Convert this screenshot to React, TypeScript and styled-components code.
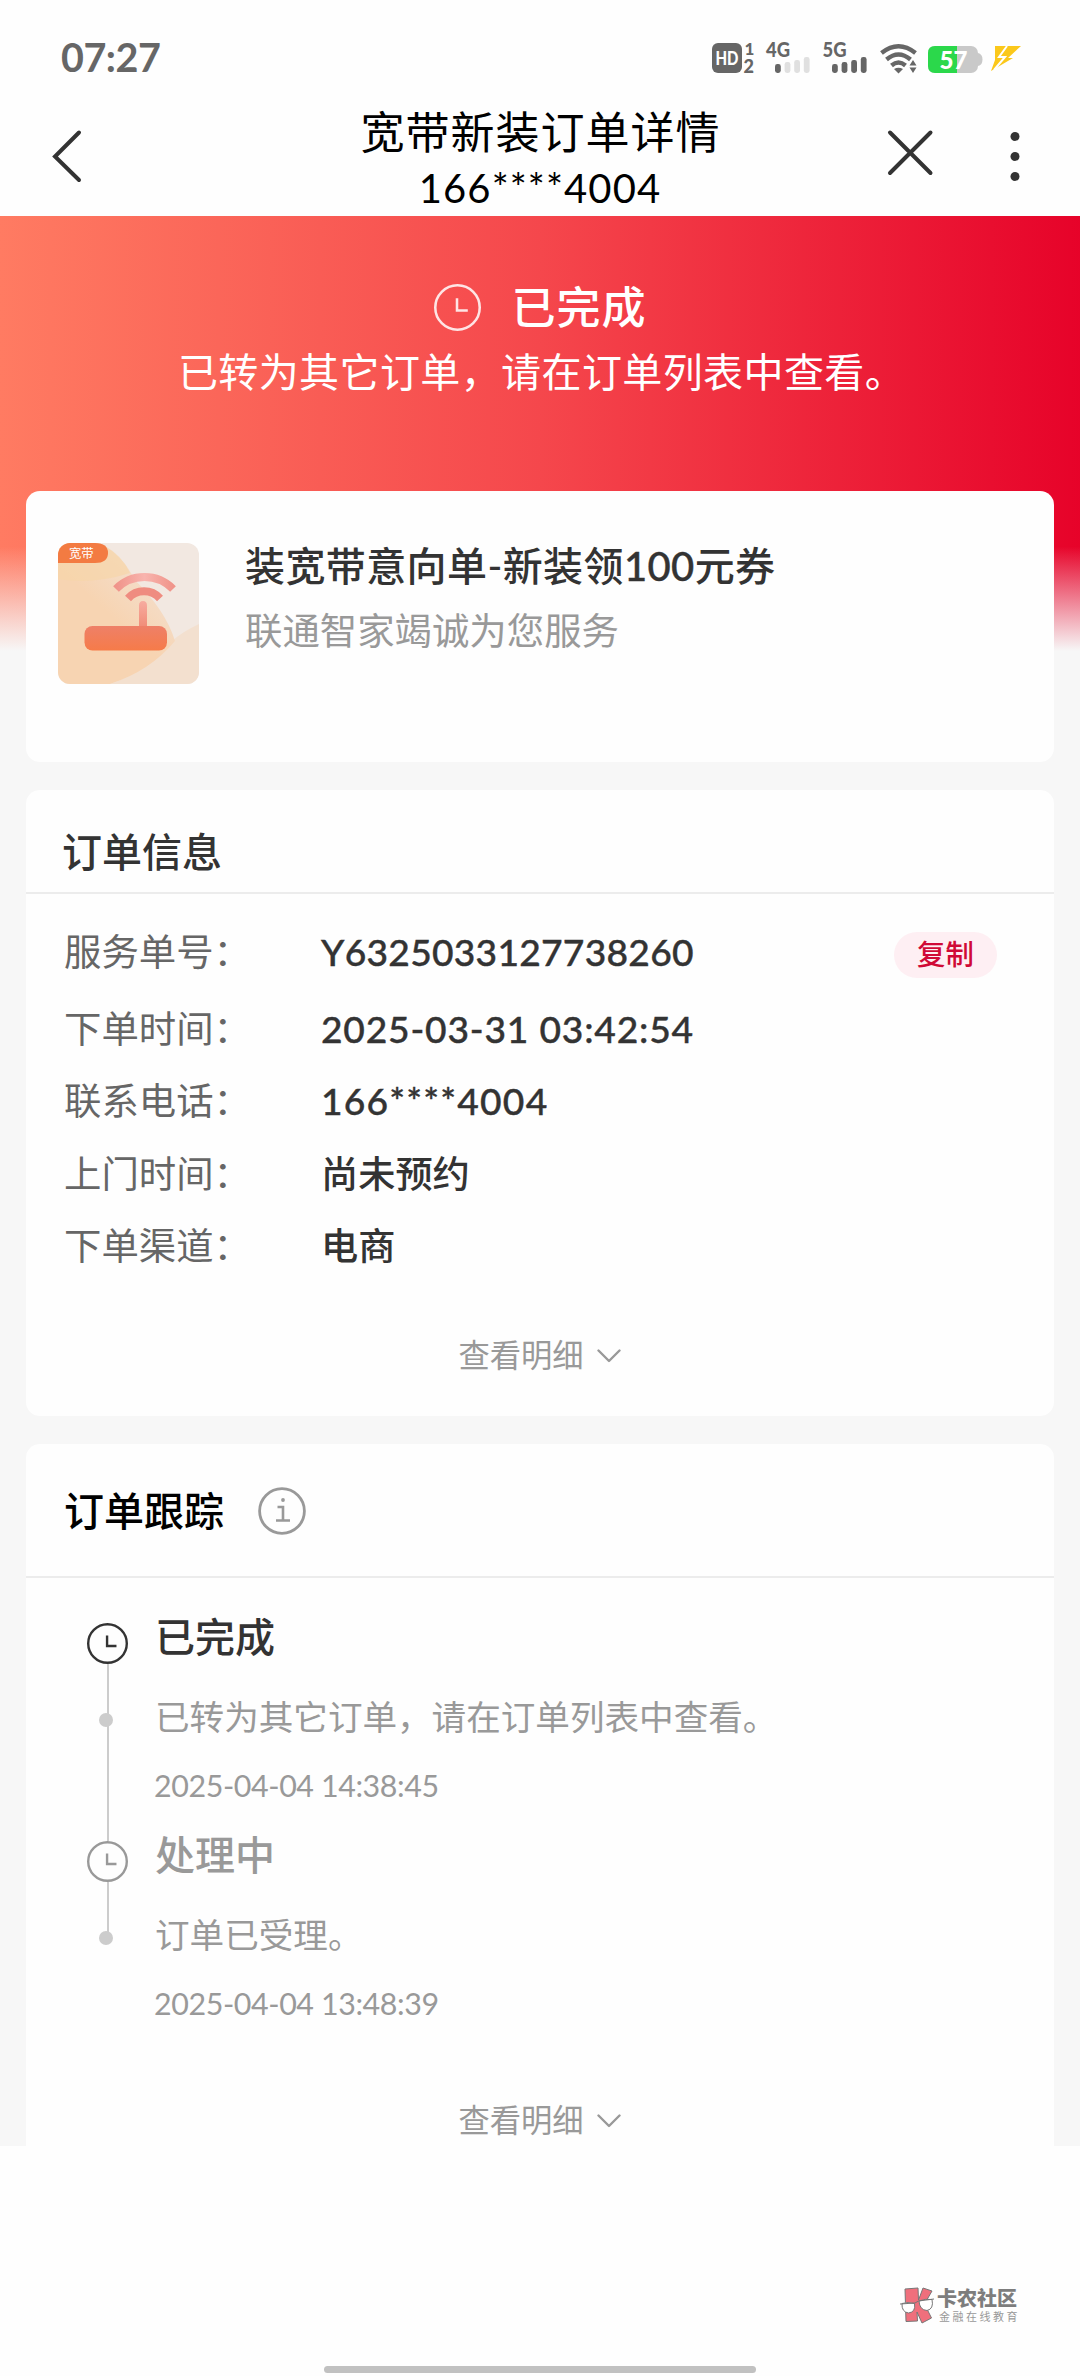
import React from "react";
import styled, { createGlobalStyle } from "styled-components";

const GlobalStyle = createGlobalStyle`
  body {
    margin: 0;
    background: #fefefe;
  }
  * {
    box-sizing: border-box;
  }
`;

const Page = styled.div`
  width: 1080px;
  height: 2376px;
  display: flex;
  flex-direction: column;
  background: #fefefe;
  overflow: hidden;
  font-family: Lato, "Noto Sans CJK SC", sans-serif;
  line-height: 1.2;
  color: #333;
  white-space: nowrap;
`;

const StatusBar = styled.div`
  height: 102px;
  flex: none;
  padding: 30px 59px 14px 60px;
  display: flex;
  align-items: flex-start;
  justify-content: space-between;
  color: #666;
`;

const Clock = styled.div`
  font-size: 39.5px;
  line-height: 54px;
  font-weight: 700;
  letter-spacing: -0.5px;
  padding-left: 1px;
`;

const StatusIcons = styled.svg`
  display: block;
  width: 320px;
  height: 42px;
  margin-top: 8px;
  font-family: Lato, "Noto Sans CJK SC", sans-serif;
`;

const NavBar = styled.div`
  height: 114px;
  flex: none;
  display: grid;
  grid-template-columns: 300px 1fr 300px;
`;

const NavTitle = styled.div`
  display: flex;
  flex-direction: column;
  align-items: center;
  color: #000;
`;

const TitleText = styled.div`
  padding-left: 1px;
  font-size: 44px;
  letter-spacing: 1px;
  line-height: 60px;
`;

const TitlePhone = styled.div`
  font-size: 40px;
  letter-spacing: 1.1px;
  line-height: 52px;
`;

const NavLeft = styled.div`
  padding: 26px 0 0 50px;
`;

const NavRight = styled.div`
  display: flex;
  justify-content: flex-end;
  gap: 75px;
  padding: 26px 59px 0 0;
`;

const Icon = styled.svg`
  display: block;
  flex: none;
`;

const Main = styled.main`
  height: 1930px;
  flex: none;
  padding: 0 26px;
  background-color: #f7f7f7;
  background-image: linear-gradient(
      to bottom,
      rgba(247, 247, 247, 0) 76%,
      #f7f7f7 100%
    ),
    linear-gradient(to right, #ff7b62 0%, #f5474c 50%, #e60028 102%);
  background-size: 100% 435px;
  background-repeat: no-repeat;
`;

const Hero = styled.section`
  height: 275px;
  padding-top: 60px;
  color: #fff;
  display: flex;
  flex-direction: column;
  align-items: center;
`;

const HeroStatus = styled.div`
  display: flex;
  align-items: center;
  gap: 31px;
  height: 62px;
  font-size: 44px;
  font-weight: 500;
  letter-spacing: 1px;
`;

const HeroNote = styled.div`
  margin-top: 4px;
  padding-left: 3px;
  font-size: 40px;
  letter-spacing: 0.4px;
  line-height: 60px;
`;

const Card = styled.section<{ $height: number; $open?: boolean }>`
  height: ${(p) => p.$height}px;
  background: #fefefe;
  border-radius: ${(p) => (p.$open ? "14px 14px 0 0" : "14px")};
  display: flex;
  flex-direction: column;
  & + & {
    margin-top: 28px;
  }
`;

const Product = styled.div`
  display: flex;
  gap: 46px;
  padding: 52px 32px;
`;

const ProductText = styled.div`
  display: flex;
  flex-direction: column;
`;

const ProductName = styled.div`
  font-size: 40px;
  font-weight: 500;
  letter-spacing: 0.4px;
  line-height: 46px;
`;

const ProductDesc = styled.div`
  margin-top: 19px;
  font-size: 37.4px;
  line-height: 46px;
  color: #999;
`;

const CardHead = styled.div<{ $height: number; $color: string; $left: number }>`
  height: ${(p) => p.$height}px;
  flex: none;
  padding-left: ${(p) => p.$left}px;
  padding-top: ${(p) => (p.$height > 110 ? 2 : 22)}px;
  border-bottom: 2px solid #ececec;
  display: flex;
  align-items: center;
  gap: 34px;
  font-size: 40px;
  font-weight: 500;
  color: ${(p) => p.$color};
`;

const InfoList = styled.div`
  display: grid;
  grid-template-columns: 257px 1fr auto;
  grid-template-rows: 82px 72px 73px 72px 73px;
  align-items: center;
  padding: 17px 57px 0 38px;
`;

const Label = styled.div`
  font-size: 37.4px;
  color: #666;
  grid-column: 1;
`;

const Value = styled.div<{ $spacing?: number }>`
  font-size: 37.2px;
  font-weight: 500;
  letter-spacing: ${(p) => p.$spacing ?? 0}px;
  -webkit-text-stroke: ${(p) => (p.$spacing === undefined ? "0" : "0.4px currentColor")};
`;

const Amount = styled.span`
  -webkit-text-stroke: 0.4px currentColor;
`;

const CopyButton = styled.button`
  width: 103px;
  height: 46px;
  margin-top: 5px;
  padding: 0;
  border: 0;
  border-radius: 23px;
  background: #feeff3;
  color: #d00a36;
  font: 500 28.4px/45px Lato, "Noto Sans CJK SC", sans-serif;
`;

const MoreLink = styled.div<{ $top: number }>`
  margin-top: ${(p) => p.$top}px;
  display: flex;
  align-items: center;
  justify-content: center;
  gap: 13px;
  height: 48px;
  padding-right: 1px;
  font-size: 31.3px;
  color: #999;
`;

const Timeline = styled.div`
  padding: 34px 0 0 60px;
  display: flex;
  flex-direction: column;
`;

const Step = styled.div`
  height: 218px;
  display: grid;
  grid-template-columns: 42px 1fr;
  column-gap: 27px;
`;

const Rail = styled.div`
  display: flex;
  flex-direction: column;
  align-items: center;
  padding-top: 11px;
`;

const RailLine = styled.div<{ $height: number }>`
  width: 2px;
  height: ${(p) => p.$height}px;
  flex: none;
  margin-left: 2px;
  background: #ccc;
`;

const RailDot = styled.div`
  width: 14px;
  height: 14px;
  flex: none;
  margin: -1px 2px -1px 0;
  border-radius: 50%;
  background: #ccc;
`;

const StepBody = styled.div`
  display: flex;
  flex-direction: column;
`;

const StepTitle = styled.div<{ $active: boolean }>`
  font-size: 40px;
  font-weight: 500;
  line-height: 50px;
  color: ${(p) => (p.$active ? "#333" : "#999")};
`;

const StepNote = styled.div`
  margin-top: 31px;
  font-size: 34.6px;
  line-height: 48px;
  color: #999;
`;

const StepTime = styled.div`
  margin-top: 24px;
  margin-left: -1px;
  font-size: 30.4px;
  letter-spacing: -0.4px;
  line-height: 40px;
  color: #999;
`;

const Footer = styled.footer`
  flex: 1;
  display: flex;
  flex-direction: column;
  align-items: center;
  justify-content: space-between;
  padding: 141px 0 3px;
`;

const Brand = styled.div`
  align-self: flex-end;
  display: flex;
  gap: 3px;
  margin-right: 60px;
`;

const BrandText = styled.div`
  display: flex;
  flex-direction: column;
`;

const BrandName = styled.div`
  font-size: 20px;
  font-weight: 900;
  line-height: 23px;
  color: #7d7d7d;
`;

const BrandSlogan = styled.div`
  padding-left: 2px;
  font-size: 11px;
  letter-spacing: 2.5px;
  line-height: 14px;
  color: #999;
`;

const HomeIndicator = styled.div`
  width: 432px;
  height: 7px;
  border-radius: 4px;
  background: #c1c1c1;
`;

const ClockIcon = ({ size, color, stroke }: { size: number; color: string; stroke: number }) => (
  <Icon width={size} height={size} viewBox="0 0 48 48" fill="none" stroke={color} strokeWidth={stroke}>
    <circle cx="24" cy="24" r={24 - stroke / 2} />
    <path d="M23.5 14.5V27H34.5" />
  </Icon>
);

const Chevron = () => (
  <Icon width="24" height="14" viewBox="0 0 24 14" fill="none" stroke="#999" strokeWidth="2.4" strokeLinecap="round" strokeLinejoin="round">
    <path d="M1.5 1.5L12 12L22.5 1.5" />
  </Icon>
);

const RouterPicture = () => (
  <Icon width="141" height="141" viewBox="0 0 141 141">
    <defs>
      <clipPath id="tile">
        <rect width="141" height="141" rx="12" />
      </clipPath>
      <linearGradient id="router" x1="0" y1="0" x2="0" y2="1">
        <stop offset="0" stopColor="#ee8068" />
        <stop offset="1" stopColor="#f67b49" />
      </linearGradient>
      <linearGradient id="mast" x1="0" y1="0" x2="0" y2="1">
        <stop offset="0" stopColor="#f7aca0" />
        <stop offset="1" stopColor="#f08a74" />
      </linearGradient>
      <linearGradient id="wave" x1="0" y1="0" x2="1" y2="0">
        <stop offset="0" stopColor="#f0948a" />
        <stop offset="0.5" stopColor="#f8b4ae" />
        <stop offset="1" stopColor="#f0948a" />
      </linearGradient>
      <linearGradient id="sand" gradientUnits="userSpaceOnUse" x1="95" y1="20" x2="50" y2="70">
        <stop offset="0" stopColor="#f3e0d0" />
        <stop offset="1" stopColor="#f7d4b2" />
      </linearGradient>
    </defs>
    <g clipPath="url(#tile)">
      <rect width="141" height="141" fill="#f2e8e1" />
      <path d="M141 81Q124 89 114 98Q86 130 52 141H141Z" fill="#f3e0cf" />
      <path d="M0 0H42Q66 14 76 36Q108 68 117 98Q92 128 52 141H0Z" fill="url(#sand)" />
      <path d="M0 36Q34 42 72 30Q64 12 45 2H0Z" fill="#f6d5aa" opacity="0.7" />
      <path d="M0 0H37Q50 0 50 10Q50 20 37 20H0Z" fill="#f37b42" />
      <text x="11" y="14.5" fontSize="12.3" fill="#fff" fontFamily='"Noto Sans CJK SC", sans-serif'>宽带</text>
      <path d="M58 46A40 40 0 0 1 115 46" fill="none" stroke="url(#wave)" strokeWidth="8" />
      <path d="M70 55.500A21.500 21.500 0 0 1 102 55.500" fill="none" stroke="#ef8c80" strokeWidth="8" />
      <path d="M81 86V62.500Q81 58 85 58Q89 58 89 62.500V86Z" fill="url(#mast)" />
      <rect x="26.500" y="83" width="82.500" height="24.500" rx="8" fill="url(#router)" />
    </g>
  </Icon>
);

const BrandLogo = () => (
  <Icon width="34" height="37" viewBox="0 0 34 37" stroke="#777" strokeWidth="1" strokeLinejoin="round">
    <path d="M5 2L18 1L18.500 13L23 1L32 4L24.500 17L31.500 31L22 36L17 25L17.500 34L6 34.500Z" fill="#ef6f7c" />
    <path d="M2 16.500Q8 14.500 14.500 16.500Q16 25 8.500 26Q1.500 25 2 16.500Z" fill="#fff" />
    <path d="M19 14Q25 11.500 32 12.500Q34 22 27 23.500Q19.500 23 19 14Z" fill="#fff" />
    <path d="M0 17L15 16L18.500 14L34 12" fill="none" />
  </Icon>
);

const SignalBars = ({ x, level }: { x: number; level: number }) => (
  <g>
    {[26, 24, 22, 19].map((y, i) => (
      <rect key={y} x={x + i * 9.6} y={y} width="5.8" height={35 - y} rx="2.4" fill={i < level ? "#666" : "#e0e0e0"} />
    ))}
  </g>
);

const info = [
  { label: "服务单号：", value: "Y6325033127738260", spacing: 0.25, copy: true },
  { label: "下单时间：", value: "2025-03-31 03:42:54", spacing: 0.8 },
  { label: "联系电话：", value: "166****4004", spacing: 1.2 },
  { label: "上门时间：", value: "尚未预约" },
  { label: "下单渠道：", value: "电商" },
];

const steps = [
  { title: "已完成", note: "已转为其它订单，请在订单列表中查看。", time: "2025-04-04 14:38:45" },
  { title: "处理中", note: "订单已受理。", time: "2025-04-04 13:48:39" },
];

export default function App() {
  return (
    <Page>
      <GlobalStyle />
      <StatusBar>
        <Clock>07:27</Clock>
        <StatusIcons viewBox="0 0 320 42" fill="#666">
          <rect x="11" y="5" width="30" height="30" rx="6" />
          <text x="14.500" y="26.500" fontSize="18.500" fontWeight="900" fill="#fff" textLength="23" lengthAdjust="spacingAndGlyphs">HD</text>
          <text x="43.500" y="17" fontSize="17" fontWeight="900">1</text>
          <text x="42.500" y="35" fontSize="18" fontWeight="900">2</text>
          <text x="65" y="19" fontSize="20" fontWeight="900" textLength="24" lengthAdjust="spacingAndGlyphs">4G</text>
          <SignalBars x={74} level={1} />
          <text x="121.500" y="19" fontSize="20" fontWeight="900" textLength="24" lengthAdjust="spacingAndGlyphs">5G</text>
          <SignalBars x={131} level={4} />
          <g fill="none" stroke="#666" strokeWidth="4.4">
            <path d="M180.500 15Q197.500 1.500 214.500 15" />
            <path d="M185.500 21.500Q197.500 11.500 209.500 21.500" />
            <path d="M190.500 27.500Q197.500 21.500 204.500 27.500" />
          </g>
          <path d="M193 31Q197.500 28.500 202 31L197.500 35.500Z" />
          <path d="M208.500 27.500L212 22L215.500 27.500ZM208.500 29.500L212 35L215.500 29.500Z" />
          <rect x="227" y="8" width="50" height="27" rx="7" fill="#c9c9c9" />
          <path d="M277 15Q281.500 16 281.500 21.500Q281.500 27 277 28Z" fill="#c9c9c9" />
          <path d="M234 8H256V35H234Q227 35 227 28V15Q227 8 234 8Z" fill="#2bd84b" />
          <text x="238.500" y="30.500" fontSize="25" fontWeight="900" fill="#fff" textLength="28" lengthAdjust="spacingAndGlyphs">57</text>
          <path d="M294 8H320L307 20H312L290 33L294 22Z" fill="#fbc81b" />
          <path d="M306 8L298 19L304 19L293 32" fill="none" stroke="#fff" strokeWidth="2" />
        </StatusIcons>
      </StatusBar>
      <NavBar>
        <NavLeft>
          <Icon width="34" height="56" viewBox="0 0 34 56" fill="none" stroke="#333" strokeWidth="4" strokeLinecap="round">
            <path d="M29 4.500L5 28.500L29 52" />
          </Icon>
        </NavLeft>
        <NavTitle>
          <TitleText>宽带新装订单详情</TitleText>
          <TitlePhone>166****4004</TitlePhone>
        </NavTitle>
        <NavRight>
          <Icon width="48" height="50" viewBox="0 0 48 50" fill="none" stroke="#333" strokeWidth="4" strokeLinecap="round">
            <path d="M4 4.500L44.500 45M44.500 4.500L4 45" />
          </Icon>
          <Icon width="12" height="56" viewBox="0 0 12 56" fill="#333">
            <circle cx="6" cy="8.500" r="4.500" />
            <circle cx="6" cy="28.500" r="4.500" />
            <circle cx="6" cy="48.500" r="4.500" />
          </Icon>
        </NavRight>
      </NavBar>
      <Main>
        <Hero>
          <HeroStatus>
            <ClockIcon size={47} color="rgba(255,255,255,0.85)" stroke={2.6} />
            已完成
          </HeroStatus>
          <HeroNote>已转为其它订单，请在订单列表中查看。</HeroNote>
        </Hero>
        <Card $height={271}>
          <Product>
            <RouterPicture />
            <ProductText>
              <ProductName>
                装宽带意向单-新装领<Amount>100</Amount>元券
              </ProductName>
              <ProductDesc>联通智家竭诚为您服务</ProductDesc>
            </ProductText>
          </Product>
        </Card>
        <Card $height={626}>
          <CardHead $height={104} $color="#333" $left={36}>订单信息</CardHead>
          <InfoList>
            {info.map((row) => (
              <React.Fragment key={row.label}>
                <Label>{row.label}</Label>
                <Value $spacing={row.spacing}>{row.value}</Value>
                {row.copy && <CopyButton>复制</CopyButton>}
              </React.Fragment>
            ))}
          </InfoList>
          <MoreLink $top={49}>
            查看明细
            <Chevron />
          </MoreLink>
        </Card>
        <Card $height={703} $open>
          <CardHead $height={134} $color="#000" $left={38}>
            订单跟踪
            <Icon width="48" height="48" viewBox="0 0 48 48" fill="none" stroke="#999" strokeWidth="2.8">
              <circle cx="24" cy="24" r="22.400" />
              <path d="M19.500 20H25V33M18 33.500H32" strokeWidth="2.600" />
              <circle cx="25" cy="13" r="1.900" fill="#999" stroke="none" />
            </Icon>
          </CardHead>
          <Timeline>
            {steps.map((s, i) => (
              <Step key={s.title}>
                <Rail>
                  <ClockIcon size={41} color={i === 0 ? "#333" : "#999"} stroke={2.8} />
                  <RailLine $height={50} />
                  <RailDot />
                  {i === 0 && <RailLine $height={115} />}
                </Rail>
                <StepBody>
                  <StepTitle $active={i === 0}>{s.title}</StepTitle>
                  <StepNote>{s.note}</StepNote>
                  <StepTime>{s.time}</StepTime>
                </StepBody>
              </Step>
            ))}
          </Timeline>
          <MoreLink $top={49}>
            查看明细
            <Chevron />
          </MoreLink>
        </Card>
      </Main>
      <Footer>
        <Brand>
          <BrandLogo />
          <BrandText>
            <BrandName>卡农社区</BrandName>
            <BrandSlogan>金融在线教育</BrandSlogan>
          </BrandText>
        </Brand>
        <HomeIndicator />
      </Footer>
    </Page>
  );
}
